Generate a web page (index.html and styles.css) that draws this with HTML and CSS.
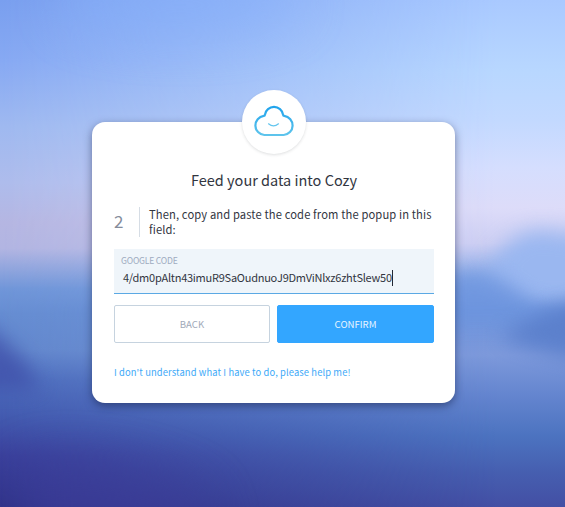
FILE: index.html
```
<!DOCTYPE html>
<html lang="en">
<head>
<meta charset="utf-8">
<title>Cozy</title>
<link rel="stylesheet" href="styles.css">
</head>
<body>
<svg class="scenery" viewBox="0 0 565 507" preserveAspectRatio="none" aria-hidden="true">
  <defs>
    <linearGradient id="west" x2="0" y2="1">
      <stop offset="0" stop-color="#799fef"/><stop offset=".12" stop-color="#87a9f3"/>
      <stop offset=".25" stop-color="#9fb9f0"/><stop offset=".36" stop-color="#aebcec"/>
      <stop offset=".44" stop-color="#b5b6e2"/><stop offset=".49" stop-color="#b2b5e2"/>
      <stop offset=".57" stop-color="#7096d9"/><stop offset=".62" stop-color="#668dd2"/>
      <stop offset=".69" stop-color="#6287cd"/><stop offset=".75" stop-color="#4d6dbd"/>
      <stop offset=".82" stop-color="#435bb0"/><stop offset=".9" stop-color="#3a409b"/>
      <stop offset="1" stop-color="#303389"/>
    </linearGradient>
    <linearGradient id="east" x2="0" y2="1">
      <stop offset="0" stop-color="#a9c9ff"/><stop offset=".14" stop-color="#b8d7ff"/>
      <stop offset=".24" stop-color="#c3d9ff"/><stop offset=".33" stop-color="#d5defe"/>
      <stop offset=".41" stop-color="#dddcf9"/><stop offset=".48" stop-color="#cdcff3"/>
      <stop offset=".55" stop-color="#8babe7"/><stop offset=".61" stop-color="#6e94dc"/>
      <stop offset=".7" stop-color="#7d99db"/><stop offset=".78" stop-color="#6485cf"/>
      <stop offset=".86" stop-color="#4c73c0"/><stop offset=".93" stop-color="#465fb0"/>
      <stop offset="1" stop-color="#434fa4"/>
    </linearGradient>
    <linearGradient id="blend">
      <stop offset="0" stop-color="#000"/><stop offset=".88" stop-color="#fff"/>
    </linearGradient>
    <mask id="fade"><rect width="565" height="507" fill="url(#blend)"/></mask>
    <filter id="soft" x="-60%" y="-60%" width="220%" height="220%" color-interpolation-filters="sRGB"><feGaussianBlur stdDeviation="10"/></filter>
    <filter id="wide" x="-80%" y="-100%" width="260%" height="300%" color-interpolation-filters="sRGB"><feGaussianBlur stdDeviation="24"/></filter>
  </defs>
  <rect width="565" height="507" fill="url(#west)"/>
  <rect width="565" height="507" fill="url(#east)" mask="url(#fade)"/>
  <ellipse cx="180" cy="5" rx="120" ry="30" fill="#86b0fb" opacity=".5" filter="url(#wide)"/>
  <path d="M485 278Q505 232 540 230L600 238V305H530Z" fill="#9ab7f0" filter="url(#soft)"/>
  <path d="M445 280Q480 262 510 285T545 305L565 310V330L500 325H445Z" fill="#6d95df" opacity=".75" filter="url(#soft)"/>
  <path d="M500 337Q545 305 600 295V364Q540 354 500 337Z" fill="#587dca" opacity=".85" filter="url(#soft)"/>
  <path d="M-40 305Q5 338 25 362L40 390H-40Z" fill="#4050aa" opacity=".8" filter="url(#soft)"/>
  <path d="M20 465Q110 450 205 495L215 560H20Z" fill="#3e3d9a" opacity=".55" filter="url(#wide)"/>
</svg>
<main class="page">
  <section class="card">
    <div class="badge">
      <svg class="cloud" viewBox="0 0 42 34" fill="none" stroke-linecap="round">
        <defs><linearGradient id="sky" x2="0" y2="1"><stop stop-color="#21a4ec"/><stop offset="1" stop-color="#5ec4ec"/></linearGradient></defs>
        <path d="M11.300 30A9.600 9.600 0 0 1 10.800 10.900Q11.800 10.800 11.900 9.800A9.200 9.200 0 0 1 30.100 9.800Q30.200 10.800 31.200 10.900A9.600 9.600 0 0 1 30.700 30Z" stroke="url(#sky)" stroke-width="2.200"/>
        <path d="M15.500 18.800Q20.500 23 25.500 18.800" stroke="#62c5ee" stroke-width="1.200"/>
      </svg>
    </div>
    <h1 class="title">Feed your data into Cozy</h1>
    <div class="step">
      <span class="number">2</span>
      <p class="instruction">Then, copy and paste the code from the popup in this field:</p>
    </div>
    <div class="field">
      <span class="label">GOOGLE CODE</span>
      <div class="value"><span class="code">4/dm0pAltn43imuR9SaOudnuoJ9DmViNlxz6zhtSlew50</span><i class="caret"></i></div>
    </div>
    <div class="actions">
      <button class="button back">BACK</button>
      <button class="button confirm">CONFIRM</button>
    </div>
    <a class="help">I don't understand what I have to do, please help me!</a>
  </section>
</main>
</body>
</html>
```
FILE: styles.css
```
* { box-sizing: border-box; }
body {
  margin: 0;
  height: 507px;
  overflow: hidden;
  background: #6287cd;
  color: #32363f;
  font-family: "Noto Sans CJK SC", "Noto Sans", sans-serif;
}
.scenery { position: absolute; inset: 0; width: 100%; height: 100%; }
.page { position: relative; padding: 122px 0 0 92px; }
.card {
  position: relative;
  display: flex;
  flex-direction: column;
  width: 363px;
  height: 281px;
  padding: 46px 21px 0 22px;
  border-radius: 13px;
  background: #fff;
  box-shadow: 0 3px 9px rgba(20, 30, 65, .5);
}
.badge {
  position: absolute;
  top: -32px;
  left: 150px;
  display: grid;
  place-items: center;
  width: 64px;
  height: 64px;
  border-radius: 50%;
  background: #fff;
  box-shadow: 0 1px 3px rgba(50, 54, 63, .16);
}
.cloud { width: 42px; height: 34px; }
.title {
  margin: 0;
  font-size: 14.5px;
  font-weight: 400;
  line-height: 24px;
  text-align: center;
  white-space: nowrap;
}
.step { display: flex; height: 30px; margin-top: 15px; }
.number {
  flex: none;
  width: 26px;
  border-right: 1px solid #d6dde5;
  color: #858c9b;
  font-size: 17px;
  line-height: 27px;
}
.instruction { margin: 0 -4px 0 9px; font-size: 11.2px; line-height: 15px; letter-spacing: .12px; }
.field {
  height: 45px;
  margin-top: 12px;
  padding: 5px 7px 0;
  border-bottom: 1px solid #5ba9e4;
  background: #eff5fa;
}
.label { display: block; color: #9eabc0; font-size: 8.6px; line-height: 12px; letter-spacing: -.2px; }
.value {
  display: flex;
  align-items: center;
  height: 16px;
  margin: 4px 0 0 2px;
  font-size: 11px;
  line-height: 16px;
  letter-spacing: -.25px;
}
.code { height: 17px; line-height: 15px; }
.caret { width: 1px; height: 16px; background: #222733; }
.actions { display: grid; grid-template-columns: 156px 157px; gap: 7px; margin-top: 11px; }
.button {
  height: 38px;
  padding: 0;
  border: 1px solid #c6d3df;
  border-radius: 2px;
  background: #fff;
  color: #a0a9b9;
  font: 400 9.6px/36px "Noto Sans CJK SC", "Noto Sans", sans-serif;
}
.confirm { border-color: #33a6ff; background: #33a6ff; color: #e8f5ff; }
.help { margin-top: 21px; color: #3da9f8; font-size: 9.4px; line-height: 16px; letter-spacing: .11px; white-space: nowrap; }
```
